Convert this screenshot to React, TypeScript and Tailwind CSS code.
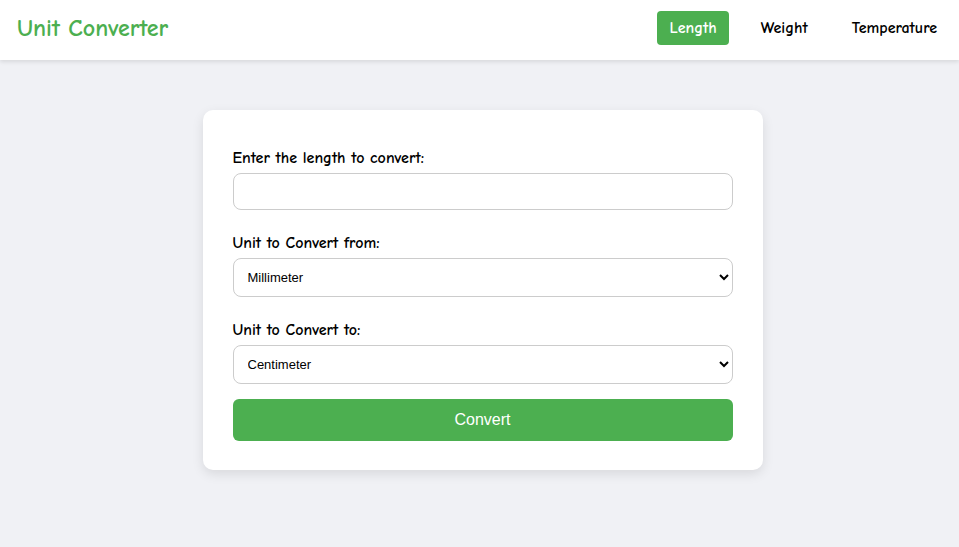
import { useState } from "react"

const comic = "font-['Comic_Sans_MS','Comic_Neue','Chalkboard_SE','Liberation_Sans',sans-serif]"

export default function App() {
  const [tab, setTab] = useState("Length")
  const tabs = ["Length", "Weight", "Temperature"]

  return (
    <div className={`min-h-[547px] bg-[#f0f1f5] ${comic}`}>
      {/* Header */}
      <header className="flex h-[60px] items-center justify-between bg-white pb-1 pl-[17px] pr-[10px] shadow-[0_2px_4px_rgba(0,0,0,0.1)]">
        <h1 className="text-[24px] font-bold leading-none text-[#4caf50]">Unit Converter</h1>
        <nav className="flex gap-5">
          {tabs.map((t) => (
            <button
              key={t}
              onClick={() => setTab(t)}
              className={
                t === tab
                  ? "h-[34px] rounded bg-[#4caf50] px-3 text-[16px] font-bold text-white"
                  : "h-[34px] rounded px-3 text-[16px] font-bold text-black"
              }
            >
              {t}
            </button>
          ))}
        </nav>
      </header>

      {/* Card */}
      <main className="flex justify-center pl-[6px] pt-[50px]">
        <form
          onSubmit={(e) => e.preventDefault()}
          className="flex w-[560px] flex-col rounded-[10px] bg-white px-[30px] pb-[29px] pt-[38px] shadow-[0_4px_12px_rgba(0,0,0,0.1)]"
        >
          <label className="mb-[5px] block text-[16px] font-bold leading-5 text-black">
            Enter the length to convert:
          </label>
          <input
            type="text"
            className="h-[37px] w-full rounded-lg border border-[#ccc] px-[14px] font-['Liberation_Sans',sans-serif] text-[13px] outline-none"
          />

          <label className="mb-[5px] mt-[23px] block text-[16px] font-bold leading-5 text-black">
            Unit to Convert from:
          </label>
          <select
            defaultValue="mm"
            className="h-[39px] w-full rounded-lg border border-[#ccc] bg-white px-[10px] font-['Liberation_Sans',sans-serif] text-[13px] text-black"
          >
            <option value="mm">Millimeter</option>
            <option value="cm">Centimeter</option>
            <option value="m">Meter</option>
            <option value="km">Kilometer</option>
            <option value="in">Inch</option>
            <option value="ft">Foot</option>
          </select>

          <label className="mb-[5px] mt-[23px] block text-[16px] font-bold leading-5 text-black">
            Unit to Convert to:
          </label>
          <select
            defaultValue="cm"
            className="h-[39px] w-full rounded-lg border border-[#ccc] bg-white px-[10px] font-['Liberation_Sans',sans-serif] text-[13px] text-black"
          >
            <option value="mm">Millimeter</option>
            <option value="cm">Centimeter</option>
            <option value="m">Meter</option>
            <option value="km">Kilometer</option>
            <option value="in">Inch</option>
            <option value="ft">Foot</option>
          </select>

          <button
            type="submit"
            className="mt-[15px] h-[42px] w-full rounded-md bg-[#4caf50] font-['Liberation_Sans',sans-serif] text-[16px] text-white"
          >
            Convert
          </button>
        </form>
      </main>
    </div>
  )
}
